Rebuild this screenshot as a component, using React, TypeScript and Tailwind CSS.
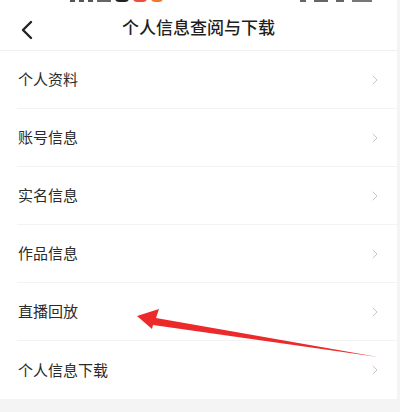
import { ChevronRight } from "lucide-react";

const items = ["个人资料", "账号信息", "实名信息", "作品信息", "直播回放", "个人信息下载"];

function StatusBarStub() {
  // only the bottom edge of the status bar shows in the shot
  return (
    <div className="flex h-[3px] items-start overflow-hidden pl-[70px]">
      <div className="mt-[-6px] flex gap-[4px]">
        <span className="h-[8px] w-[5px] bg-[#555]" />
        <span className="h-[8px] w-[5px] bg-[#555]" />
        <span className="h-[8px] w-[5px] bg-[#555]" />
        <span className="h-[8px] w-[14px] bg-[#666]" />
        <span className="h-[8px] w-[14px] rounded-full bg-[#222]" />
        <span className="h-[8px] w-[14px] rounded-full bg-[#ef4b3b]" />
        <span className="h-[8px] w-[12px] rounded-full bg-[#f0782a]" />
      </div>
      <div className="ml-auto mt-[-6px] mr-[25px] flex gap-[8px]">
        <span className="h-[8px] w-[6px] bg-[#666]" />
        <span className="h-[8px] w-[14px] bg-[#666]" />
        <span className="h-[8px] w-[8px] bg-[#666]" />
        <span className="h-[8px] w-[20px] bg-[#777]" />
      </div>
    </div>
  );
}

function Header() {
  return (
    <div className="relative flex h-[48px] items-center justify-center border-b border-[#efefef]">
      <svg
        className="absolute left-[20px] top-[17px]"
        width="14"
        height="20"
        viewBox="0 0 14 20"
        fill="none"
        stroke="#222"
        strokeWidth="2.4"
        strokeLinecap="round"
        strokeLinejoin="round"
      >
        <path d="M11 2 L3 10 L11 18" />
      </svg>
      <span className="text-[17px] font-medium text-[#1f1f1f]">个人信息查阅与下载</span>
    </div>
  );
}

function Row({ label, last }: { label: string; last: boolean }) {
  return (
    <div className="flex h-[58px] items-center pl-[17px]">
      <div
        className={
          "flex h-full flex-1 items-center pl-[1px] pr-[14px] " +
          (last ? "" : "border-b border-[#f3f3f3]")
        }
      >
        <span className="flex-1 text-[15px] text-[#2b2b2b]">{label}</span>
        <ChevronRight size={16} strokeWidth={1.4} className="text-[#c2c2c2]" />
      </div>
    </div>
  );
}

function Arrow() {
  return (
    <svg className="pointer-events-none absolute left-0 top-0" width="400" height="412">
      <polygon
        points="137,316 159,309 156,318 378,357 153,325 152,329"
        fill="#ec2a2a"
      />
    </svg>
  );
}

export default function App() {
  return (
    <div
      className="relative h-[412px] w-[400px] overflow-hidden bg-[#f4f4f4]"
      style={{ fontFamily: '"Noto Sans CJK SC", "Noto Sans", sans-serif' }}
    >
      <div className="w-[397px] bg-white">
        <StatusBarStub />
        <Header />
        {items.map((label, i) => (
          <Row key={label} label={label} last={i === items.length - 1} />
        ))}
      </div>
      <Arrow />
    </div>
  );
}
